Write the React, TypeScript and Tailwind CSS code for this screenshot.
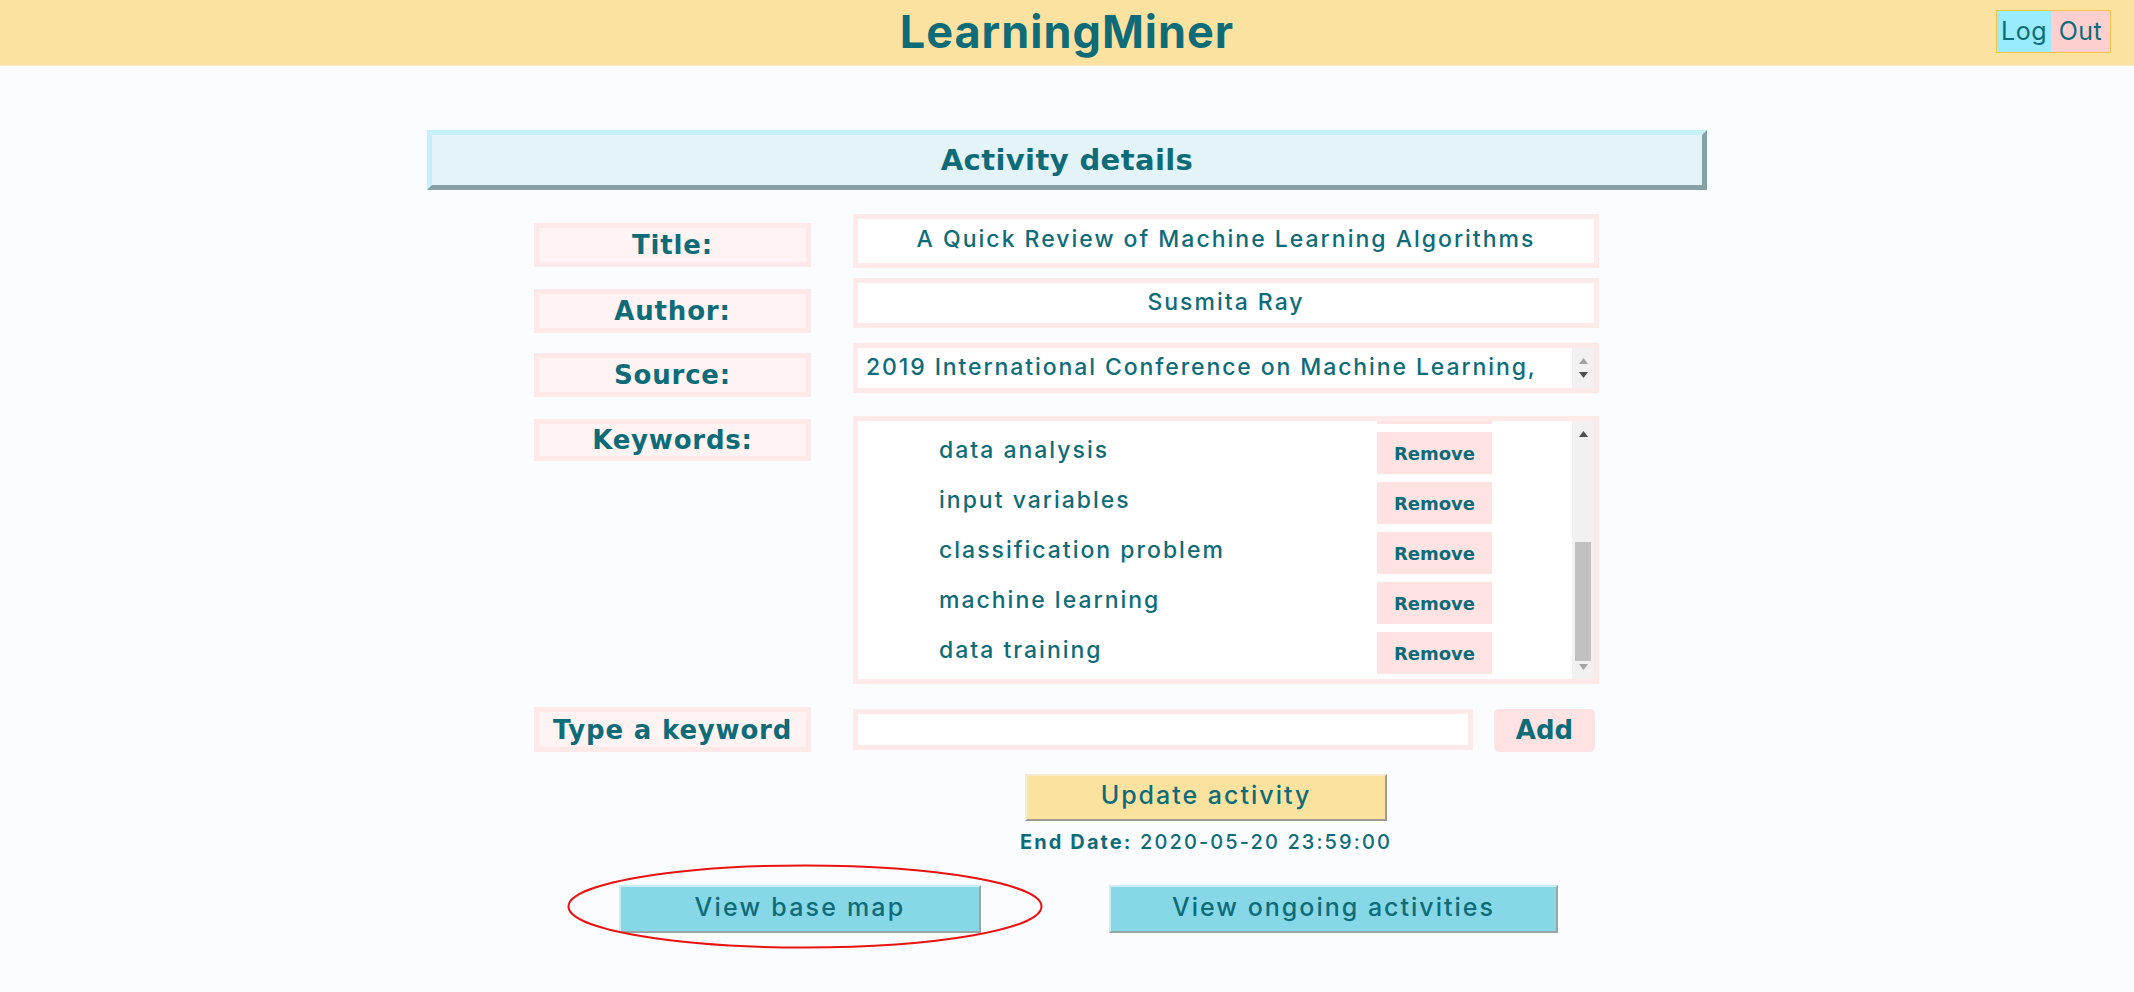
import React from 'react';

const hiddenKeywords = ['regression'];
const keywords = ['data analysis', 'input variables', 'classification problem', 'machine learning', 'data training'];

const boldFont = "font-['DejaVu_Sans',sans-serif] font-bold";

function Label({ text, className = '' }: { text: string; className?: string }) {
  return (
    <div
      className={`w-[277px] shrink-0 border-[5px] border-[#ffe9e8] bg-[#fff4f3] flex items-center justify-center text-[26px] leading-none tracking-[0.8px] ${boldFont} ${className}`}
    >
      {text}
    </div>
  );
}

function UpArrow({ color }: { color: string }) {
  return (
    <svg width="9" height="6" viewBox="0 0 9 6">
      <path d="M0 6 L4.5 0 L9 6 Z" fill={color} />
    </svg>
  );
}

function DownArrow({ color }: { color: string }) {
  return (
    <svg width="9" height="6" viewBox="0 0 9 6">
      <path d="M0 0 L9 0 L4.5 6 Z" fill={color} />
    </svg>
  );
}

export default function App() {
  return (
    <div className="min-h-[992px] bg-[#fbfcff] font-['Inter',sans-serif] text-[#0e6c79]">
      <header className="h-[66px] bg-[#fce2a0] border-b border-[#fdebc0] flex items-center justify-center relative">
        <h1 className="text-[45px] font-bold tracking-[1px] leading-none -mt-[2px]">LearningMiner</h1>
        <button className="absolute right-[23px] top-[10px] h-[43px] flex border border-[#f5c646] text-[25px] leading-none tracking-[0.5px]">
          <span className="bg-[#98ecfd] h-full w-[54px] flex items-center justify-center">Log</span>
          <span className="bg-[#ffcfcf] h-full w-[59px] flex items-center justify-center">Out</span>
        </button>
      </header>

      <main className="w-[1280px] mx-auto pt-[64px] pb-[40px]">
        <div className="h-[60px] border-[5px] border-t-[#c8f0fb] border-l-[#c8f0fb] border-r-[#86a1a5] border-b-[#86a1a5] bg-[#e3f3f8] flex items-center justify-center">
          <h2 className={`text-[29px] leading-none tracking-[0.4px] ${boldFont}`}>Activity details</h2>
        </div>

        <div className="ml-[107px] w-[1065px] mt-[24px] flex flex-col">
          <div className="flex items-start gap-[42px] h-[54px]">
            <Label text="Title:" className="h-[44px] mt-[9px]" />
            <div className="flex-1 min-w-0 h-[54px] border-[5px] border-[#ffe9e9] bg-white flex items-center justify-center text-[23px] leading-[30px] font-medium tracking-[2px] pb-[4px]">
              A Quick Review of Machine Learning Algorithms
            </div>
          </div>

          <div className="flex items-start gap-[42px] h-[50px] mt-[10px]">
            <Label text="Author:" className="h-[44px] mt-[11px]" />
            <div className="flex-1 min-w-0 h-[50px] border-[5px] border-[#ffe9e9] bg-white flex items-center justify-center text-[23px] leading-[30px] font-medium tracking-[2px] pb-[2px]">
              Susmita Ray
            </div>
          </div>

          <div className="flex items-start gap-[42px] h-[50px] mt-[15px]">
            <Label text="Source:" className="h-[44px] mt-[10px]" />
            <div className="flex-1 min-w-0 h-[50px] border-[5px] border-[#ffe9e9] bg-white flex items-stretch">
              <div className="flex-1 min-w-0 overflow-hidden whitespace-nowrap pl-[8px] flex items-center pb-[2px] text-[23px] leading-[30px] font-medium tracking-[1.9px]">
                2019 International Conference on Machine Learning,
              </div>
              <div className="w-[22px] bg-[#f1f1f1] flex flex-col items-center justify-center gap-[8px]">
                <UpArrow color="#a3a3a3" />
                <DownArrow color="#505050" />
              </div>
            </div>
          </div>

          <div className="flex items-start gap-[42px] h-[268px] mt-[23px]">
            <Label text="Keywords:" className="h-[42px] mt-[3px]" />
            <div className="flex-1 min-w-0 h-[268px] border-[5px] border-[#ffe9e9] bg-white flex items-stretch">
              <div className="flex-1 min-w-0 overflow-hidden">
                <ul className="-mt-[47px] pt-[8px] flex flex-col gap-[8px]">
                  {[...hiddenKeywords, ...keywords].map((k, i) => (
                    <li key={k} className="flex items-center h-[42px]">
                      <span className={`w-[519px] pl-[81px] pb-[6px] text-[23px] font-medium tracking-[2px] whitespace-nowrap ${i === 0 ? 'invisible' : ''}`}>{k}</span>
                      <button className={`w-[115px] h-[42px] bg-[#ffe3e3] text-[18px] ${boldFont}`}>
                        <span className={i === 0 ? 'invisible' : ''}>Remove</span>
                      </button>
                    </li>
                  ))}
                </ul>
              </div>
              <div className="w-[22px] bg-[#f1f1f1] flex flex-col items-center pt-[10px] pb-[9px]">
                <UpArrow color="#505050" />
                <div className="flex-1 w-full flex flex-col justify-end px-[3px] pt-[4px] pb-[3px]">
                  <div className="h-[119px] bg-[#c1c1c1]" />
                </div>
                <DownArrow color="#a3a3a3" />
              </div>
            </div>
          </div>

          <div className="flex items-start mt-[23px]">
            <Label text="Type a keyword" className="h-[45px]" />
            <div className="ml-[42px] w-[620px] h-[41px] mt-[2px] border-[5px] border-[#ffe9e9] bg-white" />
            <button className={`ml-[21px] w-[101px] h-[43px] mt-[2px] rounded-[5px] bg-[#ffe3e3] text-[26px] ${boldFont}`}>Add</button>
          </div>
        </div>

        <div className="ml-[591px] w-[376px] mt-[22px] flex flex-col items-center">
          <button className="w-[362px] h-[47px] bg-[#fbe29f] border-2 border-t-[#f6ead0] border-l-[#f6ead0] border-r-[#9d9a92] border-b-[#9d9a92] text-[25px] font-medium tracking-[2px] pb-[3px]">
            Update activity
          </button>
          <p className="mt-[11px] text-[20px] leading-[20px] font-medium tracking-[2.1px] whitespace-nowrap">
            <span className="font-bold">End Date:</span> 2020-05-20 23:59:00
          </p>
        </div>

        <div className="relative mt-[33px] flex">
          <button className="ml-[192px] w-[362px] h-[48px] bg-[#87d8e7] border-2 border-t-[#c9eef4] border-l-[#c9eef4] border-r-[#98a5a7] border-b-[#98a5a7] text-[25px] font-medium tracking-[2.2px] pb-[3px]">
            View base map
          </button>
          <button className="ml-[128px] w-[449px] h-[48px] bg-[#87d8e7] border-2 border-t-[#c9eef4] border-l-[#c9eef4] border-r-[#98a5a7] border-b-[#98a5a7] text-[25px] font-medium tracking-[2px] pb-[3px]">
            View ongoing activities
          </button>
          <svg className="absolute left-[140px] -top-[21px] pointer-events-none" width="476" height="85" viewBox="0 0 476 85">
            <ellipse cx="238" cy="42.5" rx="236.5" ry="41" fill="none" stroke="#e8120f" strokeWidth="2" />
          </svg>
        </div>
      </main>
    </div>
  );
}
